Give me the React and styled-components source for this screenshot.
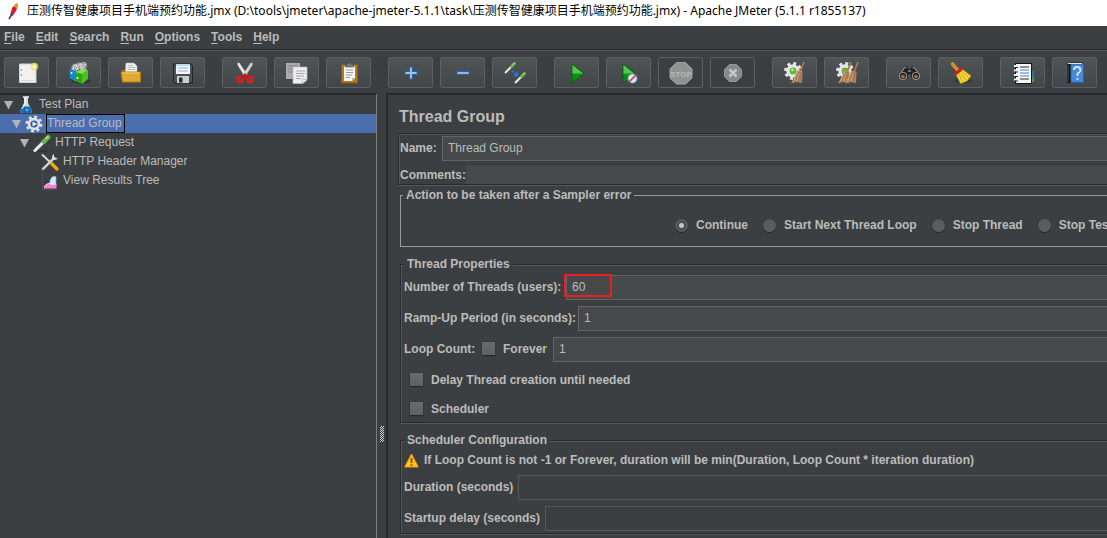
import React from "react";
import styled, { createGlobalStyle, css } from "styled-components";

const c = {
  bg: "#3c3f41",
  text: "#bbbbbb",
  field: "#45494a",
  fieldBorder: "#646464",
  dark: "#282b2d",
  light: "#56595b",
  select: "#4b6eaf",
};

const GlobalStyle = createGlobalStyle`
  *, *::before, *::after { box-sizing: border-box; }
  html, body { margin: 0; background: ${c.bg}; }
  body, button, input {
    font-family: "Liberation Sans", Arial, "Noto Sans CJK SC", sans-serif;
    font-size: 12px;
    line-height: 16px;
    color: ${c.text};
  }
  svg { display: block; flex: none; }
`;

const Window = styled.div`
  display: flex;
  flex-direction: column;
  min-height: 100vh;
  overflow: hidden;
`;

const TitleBar = styled.header`
  display: flex;
  align-items: center;
  gap: 7px;
  height: 26px;
  padding: 0 4px 4px;
  background: #fff;
  color: #000;
  font-family: "Noto Sans", "Noto Sans CJK SC", sans-serif;
  white-space: nowrap;
`;

const WindowTitle = styled.h1`
  margin: 0;
  font-size: 12px;
  font-weight: 400;
  line-height: 20px;
`;

const MenuBar = styled.nav`
  display: flex;
  gap: 11px;
  height: 25px;
  padding: 3px 4px 0;
  border-bottom: 1px solid #5a5653;
  box-shadow: inset 0 -1px 0 ${c.dark};
`;

const MenuButton = styled.button`
  height: 16px;
  padding: 0;
  border: 0;
  background: none;
  font-weight: 700;

  u { text-underline-offset: 2px; }
`;

const ToolBar = styled.div`
  display: flex;
  gap: 17px;
  height: 42px;
  padding: 6px 4px 0;
`;

const ToolGroup = styled.div`
  display: flex;
  gap: 7px;
`;

const ToolButton = styled.button`
  display: flex;
  align-items: center;
  justify-content: center;
  width: 45px;
  height: 31px;
  padding: 0;
  border: 1px solid #5c5f60;
  border-radius: 2px;
  background: linear-gradient(#4f5456, #424648);

  &:disabled { background: ${c.bg}; }
`;

const Workspace = styled.div`
  display: flex;
  flex: 1;
`;

const TreePane = styled.aside`
  flex: 0 0 377px;
  border-top: 2px solid ${c.dark};
  border-right: 1px solid #7b7d7e;
`;

const TreeRow = styled.div`
  display: flex;
  align-items: center;
  height: 19px;
  padding-left: ${(p) => 3 + p.$depth * 8}px;
  background: ${(p) => (p.$selected ? c.select : "transparent")};
`;

const Toggle = styled.span`
  flex: 0 0 14px;
`;

const TreeLabel = styled.span`
  height: 19px;
  margin-left: 3px;
  padding-right: 2px;
  border: 1px solid ${(p) => (p.$selected ? "#000" : "transparent")};
  line-height: 16px;
  white-space: nowrap;
`;

const Splitter = styled.div`
  flex: 0 0 9px;
  padding: 333px 0 0 3px;
`;

const EditorPane = styled.main`
  flex: 1;
  min-width: 0;
  overflow: hidden;
  padding: 13px 0 3px 10px;
  border-top: 2px solid ${c.dark};
  border-left: 2px solid ${c.dark};
  background: ${c.bg};
`;

const Heading = styled.h2`
  margin: 0 0 7px 1px;
  font-size: 16px;
  line-height: 18px;
`;

const etched = css`
  border: 1px solid ${c.dark};
  border-right: 0;
  box-shadow: inset 1px 1px 0 ${c.light}, 0 1px 0 ${c.light};
`;

const NameBox = styled.div`
  ${etched}
  display: flex;
  flex-direction: column;
  gap: 5px;
  margin-bottom: 1px;
  padding: 2px 0 0 1px;
`;

const Group = styled.fieldset`
  ${(p) => (p.$plain ? css`border: 1px solid #9a9a9a; border-right: 0;` : etched)}
  min-width: 0;
  margin: ${(p) => p.$gap}px 0 0 2px;
  padding: ${(p) => (p.$plain ? "14px 0 13px 2px" : "3px 0 2px 3px")};
`;

const Legend = styled.legend`
  padding: 0 3px;
  background: ${c.bg};
  font-weight: 700;
  line-height: 16px;
`;

const Rows = styled.div`
  display: flex;
  flex-direction: column;
  gap: 6px;
`;

const Row = styled.div`
  position: relative;
  display: flex;
  align-items: center;
  height: ${(p) => p.$height || 25}px;
  padding-left: ${(p) => p.$indent || 0}px;
  font-weight: 700;
  white-space: nowrap;
`;

const FieldLabel = styled.label`
  flex: 0 0 ${(p) => p.$width}px;
  padding-bottom: ${(p) => (p.$level ? 0 : 2)}px;
`;

const Field = styled.input`
  flex: 1;
  min-width: 0;
  height: 100%;
  padding: 0 5px 2px;
  border: 1px solid ${c.fieldBorder};
  border-right: 0;
  border-radius: 0;
  outline: 0;
  background: ${c.field};

  &:disabled {
    border-color: #555758;
    background: ${c.bg};
  }
`;

const CommentField = styled(Field)`
  border: 0;
`;

const Choices = styled.div`
  display: flex;
  gap: 15px;
  padding-left: 272px;
`;

const Choice = styled.label`
  display: flex;
  flex: none;
  align-items: center;
  gap: 8px;
  padding-bottom: ${(p) => p.$lift || 0}px;
  font-weight: 700;
  white-space: nowrap;
`;

const Radio = styled.input`
  appearance: none;
  width: 13px;
  height: 13px;
  margin: 0;
  border-radius: 50%;
  background: linear-gradient(#55595b, #5c6062);
  box-shadow: 0 1px 1px #242627, 0 0 1px #2b2d2e;

  &:checked {
    background: radial-gradient(circle, #c4c4c4 0 2px, #484b4c 3px, #5a5d5f 6px);
  }
`;

const CheckBox = styled.input`
  appearance: none;
  width: 13px;
  height: 13px;
  margin: 0;
  background: linear-gradient(#686a6b, #5e6061);
  box-shadow: 0 1px 1px #242627, 0 0 1px #2b2d2e;
`;

const ForeverChoice = styled(Choice)`
  width: 71px;
`;

const Highlight = styled.span`
  position: absolute;
  top: -1px;
  left: 160px;
  width: 48px;
  height: 23px;
  border: 2px solid #ed1c24;
  pointer-events: none;
`;

const Notice = styled.span`
  margin-left: 5px;
`;

/* ---------- drawings ---------- */

const Svg = ({ s = 24, children }) => (
  <svg width={s} height={s} viewBox={`0 0 ${s} ${s}`} aria-hidden="true">{children}</svg>
);

const Feather = () => (
  <svg width="16" height="18" viewBox="0 0 16 18" aria-hidden="true">
    <path d="M12.5 1 14 3 12 9 9 13 6.5 12.5 8 6Z" fill="#d22128" />
    <path d="M12.5 1 14 3 13 6 9.5 4.5Z" fill="#f59a23" />
    <path d="M7 9 10.5 11 8.500 14 6.500 12.500Z" fill="#9a2a6d" />
    <path d="M8 12 5 17" stroke="#6d2167" strokeWidth="1.5" />
  </svg>
);

const Gear = ({ x, y, r, fill = "#e4e6e8" }) => (
  <g>
    <circle cx={x} cy={y} r={r} fill="none" stroke={fill} strokeWidth="3" strokeDasharray={`${(r * 6.283) / 16} ${(r * 6.283) / 16}`} />
    <circle cx={x} cy={y} r={r - 2.5} fill="none" stroke={fill} strokeWidth="3.5" />
  </g>
);

const Whisk = ({ x = 0 }) => (
  <g transform={`translate(${x} 0)`}>
    <path d="M21 1 17.500 10" stroke="#a5794e" strokeWidth="1.800" />
    <path d="M14.500 9.500 19.500 10.500 19 22 13 21 8 22.500 12 15Z" fill="#b8895c" />
    <path d="M15.500 11 12 21M17 11 15 21M18 11 17.500 21" stroke="#91694a" strokeWidth=".7" />
    <path d="M14.500 11 10.500 20M16.500 12 13.500 20" stroke="#dab88e" strokeWidth=".6" />
  </g>
);

const Pipette = ({ x, y, k = 1 }) => (
  <g transform={`translate(${x} ${y}) scale(${k})`}>
    <path d="M1 10 7 4" stroke="#55605a" strokeWidth="3.200" />
    <path d="M0 11 7 4" stroke="#eef1ee" strokeWidth="1.800" />
    <path d="M6.500 4.500 9.500 1.500" stroke="#69b64e" strokeWidth="3" strokeLinecap="round" />
    <path d="M7.500 2.500 9.500 1" stroke="#b9e29b" strokeWidth="1" />
  </g>
);

const Triangle = () => (
  <g>
    <path d="M7 3 19 12.500 7 22Z" fill="#119a17" stroke="#075d0b" />
    <path d="M7.500 4 18 12.500H7.500Z" fill="#55c64c" />
    <path d="M8 13 17 13 8 20Z" fill="#0b8b11" />
  </g>
);

const icons = {
  New: (
    <Svg>
      <path d="M4.500 3H21V21.500H4.500Z" fill="#f1f1f1" stroke="#d2d2d2" />
      <path d="M5 19.500H20" stroke="#d8d8d8" />
      <path d="M6.500 8v2M6.500 13v2" stroke="#8d8d8d" />
      <circle cx="19.500" cy="5.500" r="3.800" fill="#f0df58" opacity=".75" />
      <circle cx="19.500" cy="5.500" r="1.800" fill="#fffdd6" />
    </Svg>
  ),
  Templates: (
    <Svg>
      <ellipse cx="14" cy="20" rx="10" ry="2.500" fill="#25282a" opacity=".6" />
      <path d="M4 7Q6 1 9 3Q11 0 14 2Q18 -1 20 3L19 11 6 12Z" fill="#989c9e" />
      <path d="M6 9Q6 3 10 4Q7 7 10 9M11 10Q10 2 15 3Q12 6 15 9M16 9Q15 4 19 3" stroke="#eceeee" fill="none" />
      <path d="M2 8 9 10V21L3 17Z" fill="#1287d8" />
      <path d="M9 10 13 8V18L9 21Z" fill="#0d5fa6" />
      <path d="M8 11 15 13V23L9 20Z" fill="#2ca80e" />
      <path d="M8 11 15 8 21 9 15 13Z" fill="#86dd52" />
      <path d="M15 13 21 9V18L15 23Z" fill="#47c41c" />
      <path d="M4.500 11v2M10.500 16v2" stroke="#fff" strokeWidth="1.500" />
    </Svg>
  ),
  Open: (
    <Svg>
      <path d="M3 9H8L9 11H22V21H3Z" fill="#a9770f" />
      <path d="M7 2H15L18 5V14H6Z" fill="#f4f4f4" stroke="#b5b5b5" strokeWidth=".6" />
      <path d="M9 4.500h5M8.500 6.500h8M8.500 8.500h8" stroke="#a8a8a8" strokeWidth=".8" />
      <path d="M2 11H21.500V21H3.500Z" fill="#e0a732" stroke="#b27c12" />
      <path d="M3 12H20" stroke="#f8d377" />
    </Svg>
  ),
  Save: (
    <Svg>
      <path d="M2.500 3H20L21.500 4.500V22H4L2.500 20.500Z" fill="#4b5054" stroke="#222527" />
      <rect x="5" y="3" width="14" height="10" fill="#f2f6fb" />
      <rect x="5" y="3" width="14" height="2" fill="#b9d8f2" />
      <path d="M7 7h10M7 10h10" stroke="#8fb3d4" />
      <rect x="6" y="15" width="12" height="7" fill="#cbcdcf" />
      <rect x="8" y="16.500" width="3.500" height="5" fill="#292c2f" />
    </Svg>
  ),
  Cut: (
    <Svg>
      <path d="M4.500 1.500 6.500 2 14.500 14 12 16 4.500 4Z" fill="#e3e5e6" />
      <path d="M19.500 1.500 17.500 2 9.500 14 12 16 19.500 4Z" fill="#d0d3d5" />
      <path d="M12 12v3" stroke="#686c6f" strokeWidth="1.500" />
      <ellipse cx="7" cy="18.500" rx="2.600" ry="2.600" fill="none" stroke="#d81e1e" strokeWidth="2.600" />
      <ellipse cx="17" cy="18.500" rx="2.600" ry="2.600" fill="none" stroke="#d81e1e" strokeWidth="2.600" />
      <path d="M8.500 16.500 12 14 15.500 16.500" stroke="#c41414" strokeWidth="2.600" fill="none" />
    </Svg>
  ),
  Copy: (
    <Svg>
      <path d="M1 2H15V18H1Z" fill="#a8aaab" />
      <path d="M3 5h10M3 8h8M3 11h8" stroke="#818485" />
      <path d="M8 6H22V19L18 22.500H8Z" fill="#ededed" stroke="#bcbcbc" strokeWidth=".7" />
      <path d="M11 10h9M11 12.500h9M11 15h8M11 17.500h5" stroke="#a8a8a8" />
      <path d="M17 22.500 18 18 22 19Z" fill="#fff" stroke="#999" strokeWidth=".6" />
    </Svg>
  ),
  Paste: (
    <Svg>
      <rect x="4.500" y="3.500" width="16" height="18.500" rx="1" fill="#b97819" stroke="#8c560b" />
      <path d="M7 5H18V17L15 20H7Z" fill="#f3f3f3" />
      <path d="M9 9h7M9 11.500h7M9 14h6M9 16.500h4" stroke="#9b9b9b" />
      <path d="M8 3.500H10.500Q12.500 0 14.500 3.500H17V6H8Z" fill="#777b79" stroke="#4e514f" strokeWidth=".6" />
      <path d="M15 20 15 17H18Z" fill="#b8b8b8" />
    </Svg>
  ),
  Expand: (
    <Svg>
      <path d="M12 5.500V18.500M5.500 12H18.500" stroke="#2d66b4" strokeWidth="3.600" />
      <path d="M12 6.500V17.500M6.500 12H17.500" stroke="#9dc3ee" strokeWidth="1.800" />
    </Svg>
  ),
  Collapse: (
    <Svg>
      <path d="M5.500 12H18.500" stroke="#2d66b4" strokeWidth="3.600" />
      <path d="M6.500 12H17.500" stroke="#9dc3ee" strokeWidth="1.800" />
    </Svg>
  ),
  Toggle: (
    <Svg>
      <Pipette x={2} y={1} />
      <Pipette x={12} y={11} />
      <path d="M9 10 14 14" stroke="#2776e2" strokeWidth="2" strokeDasharray="2 1" />
      <path d="M15 10.500V15.500H10Z" fill="#2776e2" />
    </Svg>
  ),
  Start: <Svg><Triangle /></Svg>,
  "Start no pauses": (
    <Svg>
      <g transform="translate(-1 0)"><Triangle /></g>
      <circle cx="15.500" cy="17.500" r="4.500" fill="#dbe7f5" stroke="#78a3d2" />
      <path d="M12 21 19 14" stroke="#d93222" strokeWidth="1.600" />
    </Svg>
  ),
  Stop: (
    <Svg>
      <path d="M7.500 1.500H16.500L23 8V17L16.500 23H7.500L1 17V8Z" fill="#909293" stroke="#a1a3a4" />
      <text x="12" y="16" textAnchor="middle" fontSize="8" fontWeight="700" fill="#b7b9ba">STOP</text>
    </Svg>
  ),
  Shutdown: (
    <Svg>
      <path d="M8.500 3.500H15.500L20.500 8.500V15.500L15.500 20.500H8.500L3.500 15.500V8.500Z" fill="#86898a" stroke="#969899" />
      <path d="M8.500 8.500 15.500 15.500M15.500 8.500 8.500 15.500" stroke="#c3c5c6" strokeWidth="2.500" />
    </Svg>
  ),
  Clear: (
    <Svg>
      <Gear x={10} y={10} r={7.5} />
      <circle cx="10" cy="10" r="3.200" fill="#62bd2c" />
      <circle cx="9.500" cy="9" r="1.300" fill="#c4ed9e" />
      <Whisk />
    </Svg>
  ),
  "Clear all": (
    <Svg>
      <Gear x={10} y={10} r={7.5} />
      <circle cx="10" cy="10" r="3" fill="#62bd2c" />
      <Whisk x={-5} />
      <Whisk x={2} />
    </Svg>
  ),
  Search: (
    <Svg>
      <path d="M3 13 6 6 10 5 11.500 8H13.500L15 5 19 6 22 13 20 18H15L13.500 13H11.500L10 18H4L2 15Z" fill="#202224" />
      <path d="M4.500 11 7 7 9.500 6.500M15.500 6.500 18 7 20.500 11" stroke="#a3a6a8" fill="none" strokeWidth="1.200" />
      <circle cx="6" cy="15" r="3.500" fill="#111" stroke="#8f9395" strokeWidth="1.200" />
      <circle cx="19" cy="15" r="3.500" fill="#111" stroke="#8f9395" strokeWidth="1.200" />
      <circle cx="6" cy="15.500" r="1.900" fill="#c0642a" />
      <circle cx="19" cy="15.500" r="1.900" fill="#c0642a" />
      <path d="M11 10h3" stroke="#8b8f91" strokeWidth="1.500" />
    </Svg>
  ),
  "Reset search": (
    <Svg>
      <ellipse cx="14" cy="20" rx="9" ry="2" fill="#2b2e30" opacity=".6" />
      <path d="M3.500 3 9 9.500" stroke="#d68c22" strokeWidth="3.600" strokeLinecap="round" />
      <path d="M12.500 7.500 22 15 18 20 11.500 22.500 6.500 12.500Z" fill="#f0d637" stroke="#c29e12" strokeWidth=".7" />
      <path d="M10 13 13.500 21M12 12 17 19.500M13 10 20 17" stroke="#c7a51a" strokeWidth=".8" />
      <path d="M6.500 13 13 7.500" stroke="#cf1e1e" strokeWidth="3" />
    </Svg>
  ),
  "Function helper": (
    <Svg>
      <path d="M20 10h3v6h-3z" fill="#1976d2" />
      <path d="M20 16h3v5h-3z" fill="#38a431" />
      <rect x="4.500" y="2.500" width="16" height="20" fill="#fafafa" stroke="#151515" />
      <path d="M3 5h4M3 9.500h4M3 14h4M3 18.500h4" stroke="#eee" strokeWidth="2" />
      <path d="M4 6.500h3M4 11h3M4 15.500h3M4 20h3" stroke="#222" />
      <path d="M9 6h9M9 18h9" stroke="#222" strokeWidth="1.200" />
      <path d="M9 9h9M9 12h9M9 15h9" stroke="#3f7fd0" strokeWidth="1.200" />
    </Svg>
  ),
  Help: (
    <Svg>
      <path d="M4 3 6 1.500H20V22H4Z" fill="#17191b" />
      <path d="M8 3H20.500V21.500H8Z" fill="#4588dc" stroke="#2a62ab" />
      <path d="M5 2.500H19" stroke="#dce4ee" />
      <path d="M5 4v17" stroke="#4b4f53" />
      <path d="M11 9Q11 6 14 6Q17.500 6 17.500 9Q17.500 11 14.500 12.500V15M14.500 17v2" stroke="#d9e8fb" strokeWidth="1.800" fill="none" />
    </Svg>
  ),
};

const treeIcons = {
  flask: (
    <Svg s={18}>
      <path d="M7 1H11V7L15 15Q15 17 13 17H5Q3 17 3 15L7 7Z" fill="#cfdde7" />
      <path d="M5.500 10.500H12.500L15 15Q15 17 13 17H5Q3 17 3 15Z" fill="#1668b8" />
      <path d="M6 1H12" stroke="#f2f5f7" strokeWidth="1.500" />
      <path d="M8 2V8L5 13" stroke="#fff" fill="none" />
      <circle cx="10" cy="14" r="1.300" fill="#5db4f3" />
    </Svg>
  ),
  gear: (
    <Svg s={18}>
      <Gear x={9} y={9} r={7} fill="#dfe1e3" />
      <circle cx="9" cy="9" r="3.600" fill="#2d5da4" />
      <path d="M7.500 6.500 12 9 7.500 11.500Z" fill="#f0f4fa" />
    </Svg>
  ),
  pipette: (
    <Svg s={18}>
      <path d="M2 17H14" stroke="#202324" strokeWidth="1.500" opacity=".6" />
      <Pipette x={1} y={1} k={1.5} />
    </Svg>
  ),
  tools: (
    <Svg s={18}>
      <path d="M2 16 13 5" stroke="#8d9193" strokeWidth="3" strokeLinecap="round" />
      <path d="M2 16 13 5" stroke="#e8eaeb" strokeWidth="1.400" />
      <path d="M13 1Q10 3 11.500 6Q14 8 17 5.500L14.500 5 13 3.500Z" fill="#d9dcdd" />
      <path d="M1 1.500 10 10" stroke="#d8dadb" strokeWidth="1.800" />
      <path d="M10.500 10.500 16 16" stroke="#e8ac17" strokeWidth="3.200" strokeLinecap="round" />
    </Svg>
  ),
  chart: (
    <Svg s={18}>
      <path d="M1.500 1V17.500H17" stroke="#5d6062" strokeDasharray="1 1" fill="none" />
      <path d="M8.500 12Q9 6 12 4.500H15V13Q11 16 8.500 12Z" fill="#d3e9fb" stroke="#7ba8d8" strokeWidth=".7" />
      <path d="M2.500 16.500Q4 11.500 8 11.500 11 13.500 15.500 12V16.500Z" fill="#ee86d0" />
      <path d="M3 15Q5 11.500 8 11.500 11 13.500 15 12" stroke="#fbd0f0" fill="none" />
    </Svg>
  ),
};

const Arrow = () => (
  <svg width="11" height="10" viewBox="0 0 11 10" aria-hidden="true">
    <path d="M1 1H10L5.500 9.500Z" fill="#b2b2b2" />
  </svg>
);

const Warning = () => (
  <svg width="15" height="15" viewBox="0 0 15 15" aria-hidden="true">
    <path d="M7.500 1 14.300 14H.7Z" fill="#fcc81b" stroke="#ec9a12" strokeLinejoin="round" />
    <path d="M7.500 5V10M7.500 11.300V13" stroke="#b62e13" strokeWidth="1.800" />
  </svg>
);

const Grip = () => (
  <svg width="5" height="16" viewBox="0 0 5 16" aria-hidden="true">
    {[0, 1, 2, 3, 4, 5, 6, 7].map((i) => (
      <path key={i} d={`M0 ${i * 2 + 1.5}h1M1 ${i * 2 + 0.5}h1M2 ${i * 2 + 1.5}h1M3 ${i * 2 + 0.5}h1`} stroke="#c9cbcc" />
    ))}
  </svg>
);

/* ---------- content ---------- */

const menus = ["File", "Edit", "Search", "Run", "Options", "Tools", "Help"];

const toolGroups = [
  ["New", "Templates", "Open", "Save"],
  ["Cut", "Copy", "Paste"],
  ["Expand", "Collapse", "Toggle"],
  ["Start", "Start no pauses", "Stop", "Shutdown"],
  ["Clear", "Clear all"],
  ["Search", "Reset search"],
  ["Function helper", "Help"],
];

const tree = [
  { name: "Test Plan", depth: 0, icon: "flask", open: true },
  { name: "Thread Group", depth: 1, icon: "gear", open: true, selected: true },
  { name: "HTTP Request", depth: 2, icon: "pipette", open: true },
  { name: "HTTP Header Manager", depth: 3, icon: "tools" },
  { name: "View Results Tree", depth: 3, icon: "chart" },
];

const errorActions = ["Continue", "Start Next Thread Loop", "Stop Thread", "Stop Test"];

const TextRow = ({ id, label, width, children, ...field }) => (
  <Row>
    <FieldLabel htmlFor={id} $width={width}>{label}</FieldLabel>
    <Field id={id} {...field} />
    {children}
  </Row>
);

export default function App() {
  return (
    <Window>
      <GlobalStyle />
      <TitleBar>
        <Feather />
        <WindowTitle>
          {"压测传智健康项目手机端预约功能.jmx (D:\\tools\\jmeter\\apache-jmeter-5.1.1\\task\\压测传智健康项目手机端预约功能.jmx) - Apache JMeter (5.1.1 r1855137)"}
        </WindowTitle>
      </TitleBar>
      <MenuBar>
        {menus.map((m) => (
          <MenuButton key={m}><u>{m[0]}</u>{m.slice(1)}</MenuButton>
        ))}
      </MenuBar>
      <ToolBar role="toolbar">
        {toolGroups.map((group) => (
          <ToolGroup key={group[0]}>
            {group.map((name) => (
              <ToolButton key={name} aria-label={name} disabled={name === "Stop" || name === "Shutdown"}>
                {icons[name]}
              </ToolButton>
            ))}
          </ToolGroup>
        ))}
      </ToolBar>
      <Workspace>
        <TreePane role="tree">
          {tree.map((n) => (
            <TreeRow key={n.name} role="treeitem" aria-selected={!!n.selected} $depth={n.depth} $selected={n.selected}>
              <Toggle>{n.open && <Arrow />}</Toggle>
              {treeIcons[n.icon]}
              <TreeLabel $selected={n.selected}>{n.name}</TreeLabel>
            </TreeRow>
          ))}
        </TreePane>
        <Splitter><Grip /></Splitter>
        <EditorPane>
          <Heading>Thread Group</Heading>
          <NameBox>
            <TextRow id="name" label="Name:" width={42} defaultValue="Thread Group" />
            <Row $height={18}>
              <FieldLabel htmlFor="comments" $width={65} $level>Comments:</FieldLabel>
              <CommentField id="comments" />
            </Row>
          </NameBox>
          <Group $plain $gap={2}>
            <Legend>Action to be taken after a Sampler error</Legend>
            <Choices>
              {errorActions.map((a, i) => (
                <Choice key={a}>
                  <Radio type="radio" name="error-action" defaultChecked={i === 0} />
                  {a}
                </Choice>
              ))}
            </Choices>
          </Group>
          <Group $gap={9}>
            <Legend>Thread Properties</Legend>
            <Rows>
              <TextRow id="threads" label="Number of Threads (users):" width={162} defaultValue="60">
                <Highlight />
              </TextRow>
              <TextRow id="ramp" label="Ramp-Up Period (in seconds):" width={174} defaultValue="1" />
              <Row>
                <FieldLabel htmlFor="loops" $width={78}>Loop Count:</FieldLabel>
                <ForeverChoice $lift={2}><CheckBox type="checkbox" />Forever</ForeverChoice>
                <Field id="loops" defaultValue="1" />
              </Row>
              <Row $height={23} $indent={6}>
                <Choice><CheckBox type="checkbox" />Delay Thread creation until needed</Choice>
              </Row>
              <Row $height={23} $indent={6}>
                <Choice><CheckBox type="checkbox" />Scheduler</Choice>
              </Row>
            </Rows>
          </Group>
          <Group $gap={9}>
            <Legend>Scheduler Configuration</Legend>
            <Rows>
              <Row $height={18}>
                <Warning />
                <Notice>If Loop Count is not -1 or Forever, duration will be min(Duration, Loop Count * iteration duration)</Notice>
              </Row>
              <TextRow id="duration" label="Duration (seconds)" width={114} disabled />
              <TextRow id="delay" label="Startup delay (seconds)" width={141} disabled />
            </Rows>
          </Group>
        </EditorPane>
      </Workspace>
    </Window>
  );
}
